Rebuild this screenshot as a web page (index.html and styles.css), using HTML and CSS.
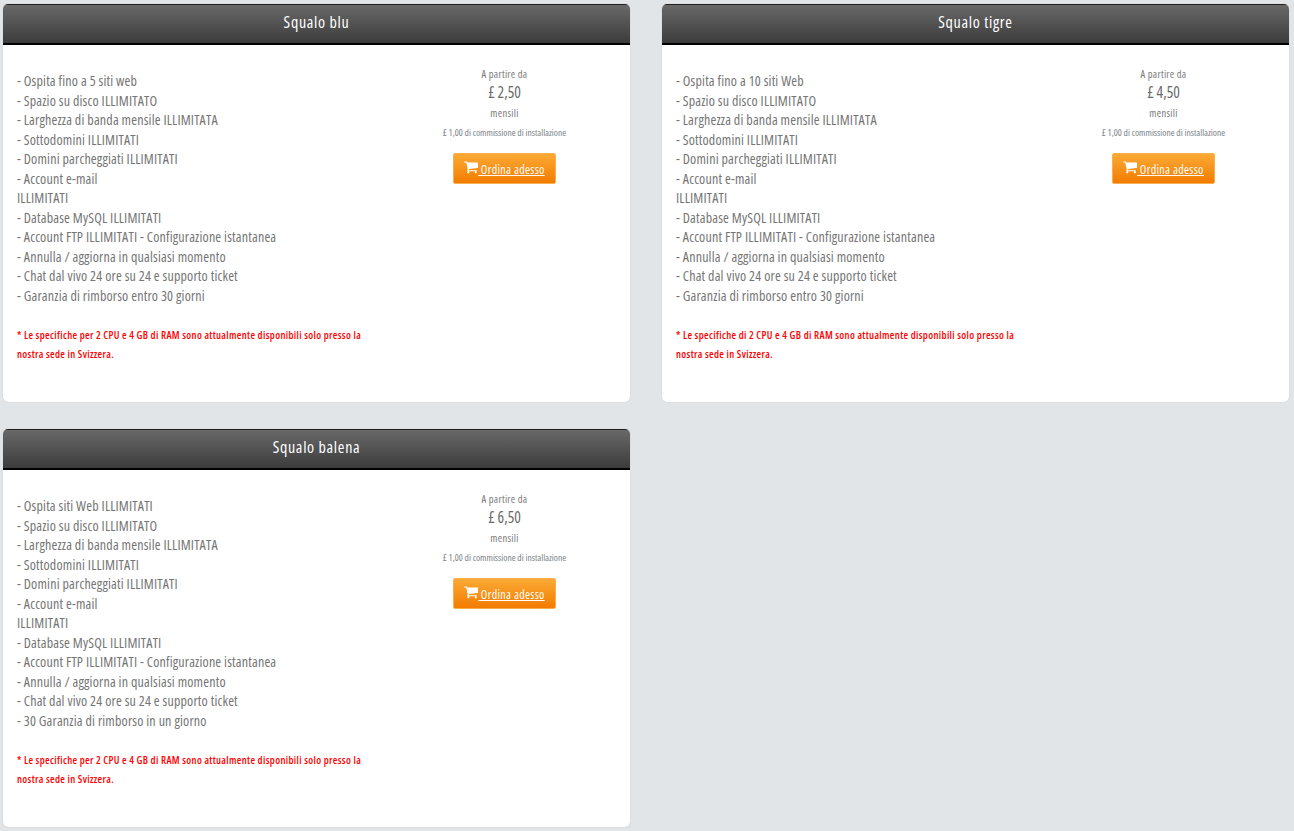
FILE: index.html
```html
<!DOCTYPE html>
<html lang="it">
<head>
<meta charset="utf-8">
<title>Piani di hosting</title>
<link rel="stylesheet" href="styles.css">
</head>
<body>
<main class="plans">
  <section class="card">
    <h2 class="card-title">Squalo blu</h2>
    <div class="card-body">
      <div class="features">
        <p class="feature-list">- Ospita fino a 5 siti web<br>- Spazio su disco ILLIMITATO<br>- Larghezza di banda mensile ILLIMITATA<br>- Sottodomini ILLIMITATI<br>- Domini parcheggiati ILLIMITATI<br>- Account e-mail<br>ILLIMITATI<br>- Database MySQL ILLIMITATI<br>- Account FTP ILLIMITATI - Configurazione istantanea<br>- Annulla / aggiorna in qualsiasi momento<br>- Chat dal vivo 24 ore su 24 e supporto ticket<br>- Garanzia di rimborso entro 30 giorni</p>
        <p class="note">* Le specifiche per 2 CPU e 4 GB di RAM sono attualmente disponibili solo presso la nostra sede in Svizzera.</p>
      </div>
      <aside class="pricing">
        <div class="from">A partire da</div>
        <div class="price">£ 2,50</div>
        <div class="period">mensili</div>
        <div class="setup">£ 1,00 di commissione di installazione</div>
        <a class="order" href="#"><svg class="cart" viewBox="64 192 1664 1472" aria-hidden="true"><path d="M704 1536q0 52-38 90t-90 38-90-38-38-90 38-90 90-38 90 38 38 90zm896 0q0 52-38 90t-90 38-90-38-38-90 38-90 90-38 90 38 38 90zm128-1088v512q0 24-16.5 42.5t-40.5 21.5l-1044 122q13 60 13 70 0 16-24 64h920q26 0 45 19t19 45-19 45-45 19h-1024q-26 0-45-19t-19-45q0-11 8-31.5t16-36 21.5-40 15.5-29.5l-177-823h-204q-26 0-45-19t-19-45 19-45 45-19h256q16 0 28.5 6.5t19.5 15.5 13 24.5 8 26 5.5 29.5 4.5 26h1201q26 0 45 19t19 45z"/></svg> Ordina adesso</a>
      </aside>
    </div>
  </section>
  <section class="card">
    <h2 class="card-title">Squalo tigre</h2>
    <div class="card-body">
      <div class="features">
        <p class="feature-list">- Ospita fino a 10 siti Web<br>- Spazio su disco ILLIMITATO<br>- Larghezza di banda mensile ILLIMITATA<br>- Sottodomini ILLIMITATI<br>- Domini parcheggiati ILLIMITATI<br>- Account e-mail<br>ILLIMITATI<br>- Database MySQL ILLIMITATI<br>- Account FTP ILLIMITATI - Configurazione istantanea<br>- Annulla / aggiorna in qualsiasi momento<br>- Chat dal vivo 24 ore su 24 e supporto ticket<br>- Garanzia di rimborso entro 30 giorni</p>
        <p class="note">* Le specifiche di 2 CPU e 4 GB di RAM sono attualmente disponibili solo presso la nostra sede in Svizzera.</p>
      </div>
      <aside class="pricing">
        <div class="from">A partire da</div>
        <div class="price">£ 4,50</div>
        <div class="period">mensili</div>
        <div class="setup">£ 1,00 di commissione di installazione</div>
        <a class="order" href="#"><svg class="cart" viewBox="64 192 1664 1472" aria-hidden="true"><path d="M704 1536q0 52-38 90t-90 38-90-38-38-90 38-90 90-38 90 38 38 90zm896 0q0 52-38 90t-90 38-90-38-38-90 38-90 90-38 90 38 38 90zm128-1088v512q0 24-16.5 42.5t-40.5 21.5l-1044 122q13 60 13 70 0 16-24 64h920q26 0 45 19t19 45-19 45-45 19h-1024q-26 0-45-19t-19-45q0-11 8-31.5t16-36 21.5-40 15.5-29.5l-177-823h-204q-26 0-45-19t-19-45 19-45 45-19h256q16 0 28.5 6.5t19.5 15.5 13 24.5 8 26 5.5 29.5 4.5 26h1201q26 0 45 19t19 45z"/></svg> Ordina adesso</a>
      </aside>
    </div>
  </section>
  <section class="card">
    <h2 class="card-title">Squalo balena</h2>
    <div class="card-body">
      <div class="features">
        <p class="feature-list">- Ospita siti Web ILLIMITATI<br>- Spazio su disco ILLIMITATO<br>- Larghezza di banda mensile ILLIMITATA<br>- Sottodomini ILLIMITATI<br>- Domini parcheggiati ILLIMITATI<br>- Account e-mail<br>ILLIMITATI<br>- Database MySQL ILLIMITATI<br>- Account FTP ILLIMITATI - Configurazione istantanea<br>- Annulla / aggiorna in qualsiasi momento<br>- Chat dal vivo 24 ore su 24 e supporto ticket<br>- 30 Garanzia di rimborso in un giorno</p>
        <p class="note">* Le specifiche per 2 CPU e 4 GB di RAM sono attualmente disponibili solo presso la nostra sede in Svizzera.</p>
      </div>
      <aside class="pricing">
        <div class="from">A partire da</div>
        <div class="price">£ 6,50</div>
        <div class="period">mensili</div>
        <div class="setup">£ 1,00 di commissione di installazione</div>
        <a class="order" href="#"><svg class="cart" viewBox="64 192 1664 1472" aria-hidden="true"><path d="M704 1536q0 52-38 90t-90 38-90-38-38-90 38-90 90-38 90 38 38 90zm896 0q0 52-38 90t-90 38-90-38-38-90 38-90 90-38 90 38 38 90zm128-1088v512q0 24-16.5 42.5t-40.5 21.5l-1044 122q13 60 13 70 0 16-24 64h920q26 0 45 19t19 45-19 45-45 19h-1024q-26 0-45-19t-19-45q0-11 8-31.5t16-36 21.5-40 15.5-29.5l-177-823h-204q-26 0-45-19t-19-45 19-45 45-19h256q16 0 28.5 6.5t19.5 15.5 13 24.5 8 26 5.5 29.5 4.5 26h1201q26 0 45 19t19 45z"/></svg> Ordina adesso</a>
      </aside>
    </div>
  </section>
</main>
</body>
</html>
```
FILE: styles.css
```css
* { box-sizing: border-box; }
html, body { margin: 0; height: 100%; }
body {
  background: #e2e5e8;
  font-family: "Open Sans", "Liberation Sans", sans-serif;
  font-stretch: 75%;
  color: #757575;
  overflow: hidden;
}
.plans {
  display: grid;
  grid-template-columns: 627px 627px;
  column-gap: 32px;
  row-gap: 27px;
  padding: 4px 0 0 3px;
}
.card {
  height: 398px;
  background: #fff;
  border-radius: 5px;
  box-shadow: 0 0 1px rgba(0,0,0,.25);
  overflow: hidden;
}
.card-title {
  margin: 0;
  height: 41px;
  border-top: 1px solid #222;
  border-bottom: 2px solid #000;
  background: linear-gradient(#686868, #3c3c3c);
  color: #fff;
  font-size: 16px;
  font-weight: 500;
  letter-spacing: .7px;
  line-height: 35px;
  text-align: center;
}
.card-body { display: flex; padding: 26px 0 0 14px; }
.features { width: 361px; }
.feature-list { margin: 0; font-size: 14px; letter-spacing: .18px; line-height: 19.5px; }
.note {
  margin: 21px 0 0;
  color: #f00;
  font-size: 10.5px;
  font-weight: 600;
  letter-spacing: .35px;
  line-height: 19px;
}
.pricing {
  flex: 1;
  margin-top: -4px;
  padding-left: 1px;
  text-align: center;
}
.from, .period { font-size: 10.5px; line-height: 14px; letter-spacing: .3px; color: #7a7a7a; }
.price { font-size: 15.5px; line-height: 22px; margin: 0 0 3px; color: #6a6a6a; }
.setup { margin-top: 6px; font-size: 9.5px; line-height: 14px; color: #7a8288; }
.order {
  display: inline-flex;
  align-items: center;
  justify-content: center;
  width: 103px;
  height: 31px;
  margin-top: 13px;
  padding-top: 1px;
  border: 1px solid #f9b04c;
  border-radius: 2px;
  background: linear-gradient(#fbaa35, #f27c00);
  color: #fff;
  font-size: 12px;
  letter-spacing: .35px;
  white-space: pre;
}
.cart { width: 14px; height: 12.4px; fill: #fff; margin-top: -3px; }
```
